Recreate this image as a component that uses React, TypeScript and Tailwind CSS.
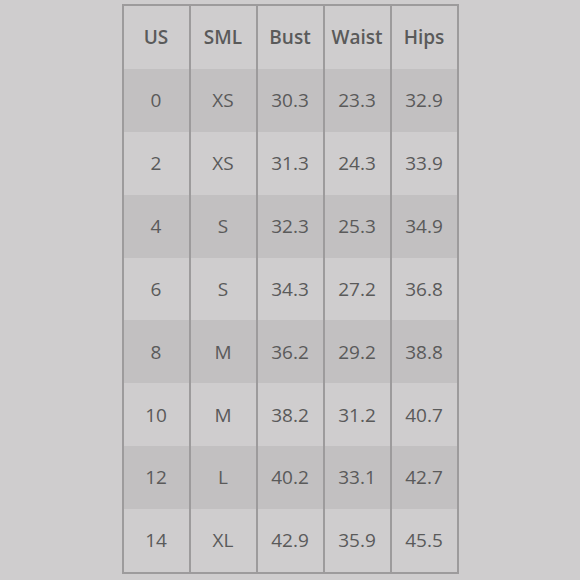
const headers = ['US', 'SML', 'Bust', 'Waist', 'Hips'];

const rows: string[][] = [
  ['0', 'XS', '30.3', '23.3', '32.9'],
  ['2', 'XS', '31.3', '24.3', '33.9'],
  ['4', 'S', '32.3', '25.3', '34.9'],
  ['6', 'S', '34.3', '27.2', '36.8'],
  ['8', 'M', '36.2', '29.2', '38.8'],
  ['10', 'M', '38.2', '31.2', '40.7'],
  ['12', 'L', '40.2', '33.1', '42.7'],
  ['14', 'XL', '42.9', '35.9', '45.5'],
];

const Row = ({ cells, shaded, bold }: { cells: string[]; shaded?: boolean; bold?: boolean }) => (
  <div className={`flex h-[63px] ${shaded ? 'bg-[#c2c0c1]' : ''}`}>
    {cells.map((c, i) => (
      <div
        key={i}
        className={`flex flex-1 items-center justify-center ${i < cells.length - 1 ? 'border-r-2 border-[#9d9b9c]' : ''} ${
          bold ? 'font-semibold' : 'font-normal'
        }`}
      >
        {c}
      </div>
    ))}
  </div>
);

export default function App() {
  return (
    <div
      className="flex h-[580px] w-[580px] justify-center bg-[#cfcdce] pt-[4px] text-[19px] text-[#5a5a5a]"
      style={{ fontFamily: '"Open Sans", "Noto Sans", sans-serif' }}
    >
      <div className="flex h-[570px] w-[337px] flex-col border-2 border-[#9d9b9c]">
        <Row cells={headers} bold />
        {rows.map((r, i) => (
          <Row key={i} cells={r} shaded={i % 2 === 0} />
        ))}
      </div>
    </div>
  );
}
